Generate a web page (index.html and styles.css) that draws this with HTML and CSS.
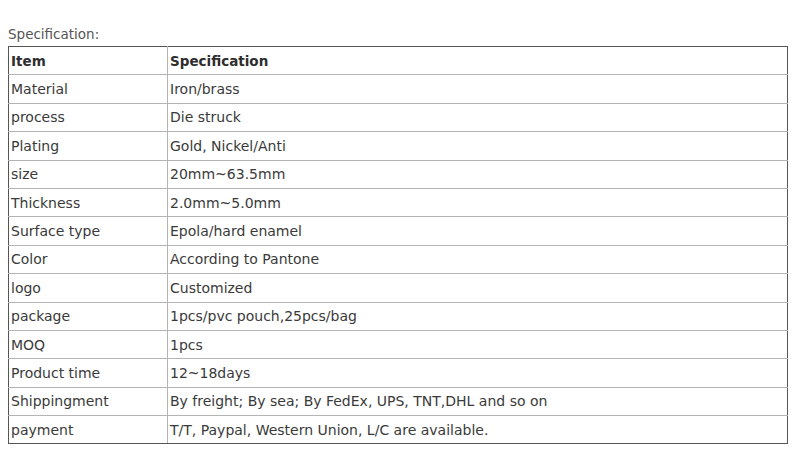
FILE: index.html
```html
<!DOCTYPE html>
<html>
<head>
<meta charset="utf-8">
<link rel="stylesheet" href="styles.css">
</head>
<body>
<div class="page">
  <p class="label">Specification:</p>
  <table class="spec">
    <tr class="head"><td class="c1">Item</td><td>Specification</td></tr>
    <tr><td class="c1">Material</td><td>Iron/brass</td></tr>
    <tr><td class="c1">process</td><td>Die struck</td></tr>
    <tr><td class="c1">Plating</td><td>Gold, Nickel/Anti</td></tr>
    <tr><td class="c1">size</td><td>20mm~63.5mm</td></tr>
    <tr><td class="c1">Thickness</td><td>2.0mm~5.0mm</td></tr>
    <tr><td class="c1">Surface type</td><td>Epola/hard enamel</td></tr>
    <tr><td class="c1">Color</td><td>According to Pantone</td></tr>
    <tr><td class="c1">logo</td><td>Customized</td></tr>
    <tr><td class="c1">package</td><td>1pcs/pvc pouch,25pcs/bag</td></tr>
    <tr><td class="c1">MOQ</td><td>1pcs</td></tr>
    <tr><td class="c1">Product time</td><td>12~18days</td></tr>
    <tr><td class="c1">Shippingment</td><td>By freight; By sea; By FedEx, UPS, TNT,DHL and so on</td></tr>
    <tr><td class="c1">payment</td><td>T/T, Paypal, Western Union, L/C are available.</td></tr>
  </table>
</div>
</body>
</html>
```
FILE: styles.css
```css
html, body {
  margin: 0;
  padding: 0;
  background: #ffffff;
}
.page {
  padding: 26px 0 0 8px;
  font-family: "DejaVu Sans", sans-serif;
  font-size: 13.5px;
  color: #3a3a3a;
}
.label {
  margin: 0 0 3px 0;
  color: #555555;
  line-height: 17px;
}
.spec {
  width: 780px;
  border-collapse: collapse;
  border: 1px solid #555555;
}
.spec td {
  border: 1px solid #b4b4b4;
  padding: 0 2px;
  height: 27.4px;
  line-height: 16px;
  font-size: 14px;
  vertical-align: middle;
}
.spec .c1 {
  width: 154px;
}
.spec tr:first-child td {
  border-top-color: #555555;
}
.spec tr:last-child td {
  border-bottom-color: #555555;
}
.spec td:first-child {
  border-left-color: #555555;
}
.spec td:last-child {
  border-right-color: #555555;
}
.head td {
  font-weight: bold;
  font-size: 13.5px;
  color: #2e2e2e;
}
```
